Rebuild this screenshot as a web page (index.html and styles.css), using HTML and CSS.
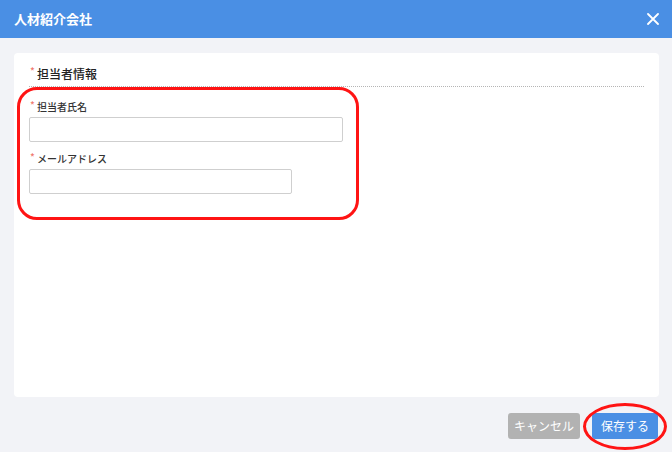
FILE: index.html
```html
<!DOCTYPE html>
<html lang="ja">
<head>
<meta charset="utf-8">
<link rel="stylesheet" href="styles.css">
</head>
<body>
<div class="dialog">
  <header class="dlg-header">
    <span class="dlg-title">人材紹介会社</span>
    <svg class="close" width="12" height="12" viewBox="0 0 12 12"><path d="M1 1L11 11M11 1L1 11" stroke="#fff" stroke-width="1.8" stroke-linecap="round"/></svg>
  </header>
  <main class="dlg-body">
    <section class="card">
      <div class="sec-title"><span class="req">*</span>担当者情報</div>
      <div class="fields">
        <div class="field">
          <label class="label"><span class="req">*</span>担当者氏名</label>
          <input class="input input-wide" type="text">
        </div>
        <div class="field">
          <label class="label"><span class="req">*</span>メールアドレス</label>
          <input class="input input-mid" type="text">
        </div>
      </div>
      <div class="mark mark-fields"></div>
    </section>
  </main>
  <footer class="dlg-footer">
    <button class="btn btn-cancel">キャンセル</button>
    <button class="btn btn-save">保存する</button>
    <div class="mark mark-save"></div>
  </footer>
</div>
</body>
</html>
```
FILE: styles.css
```css
* { box-sizing: border-box; }
html, body { margin: 0; padding: 0; }
body {
  width: 672px;
  height: 452px;
  background: #f2f3f7;
  font-family: "Noto Sans CJK JP", "Noto Sans", sans-serif;
  color: #333;
  overflow: hidden;
}
.dialog { position: relative; width: 672px; height: 452px; }
.dlg-header {
  height: 38px;
  background: #4a8fe4;
  display: flex;
  align-items: center;
  justify-content: space-between;
  padding: 0 13px 0 14px;
}
.dlg-title {
  color: #fff;
  font-size: 13px;
  font-weight: 700;
  line-height: 16px;
}
.dlg-body { padding: 15px 13px 0 14px; }
.card {
  position: relative;
  background: #fff;
  border-radius: 4px;
  height: 344px;
  padding: 13px 15px 0 15px;
}
.sec-title {
  font-size: 12px;
  line-height: 16px;
  font-weight: 500;
  color: #222;
  padding-bottom: 4px;
  border-bottom: 1px dotted #b5b5b5;
}
.req {
  color: #f07a6e;
  font-size: 10px;
  display: inline-block;
  width: 8px;
  text-align: left;
  vertical-align: top;
  line-height: 10px;
  margin-left: 1px;
  margin-right: -1px;
}
.fields {
  display: flex;
  flex-direction: column;
  gap: 10px;
  margin-top: 13px;
}
.field { display: flex; flex-direction: column; }
.label {
  font-size: 10px;
  line-height: 14px;
  font-weight: 500;
  color: #333;
  margin-bottom: 3px;
}
.input {
  height: 25px;
  border: 1px solid #cfcfcf;
  border-radius: 2px;
  background: #fff;
  padding: 0 6px;
  font: inherit;
}
.input-wide { width: 314px; }
.input-mid { width: 263px; }
.dlg-footer {
  position: relative;
  display: flex;
  justify-content: flex-end;
  gap: 12px;
  padding: 16px 14px 0 0;
}
.btn {
  height: 26px;
  border: none;
  border-radius: 3px;
  color: #fff;
  font-family: inherit;
  font-size: 12px;
  line-height: 26px;
  padding: 0;
}
.btn-cancel { width: 72px; background: #b2b2b2; }
.btn-save { width: 66px; background: #4a8fe4; }
.mark {
  position: absolute;
  border: 3px solid #ff1414;
  pointer-events: none;
}
.mark-fields {
  left: 3px;
  top: 34px;
  width: 342px;
  height: 133px;
  border-radius: 20px;
}
.mark-save {
  right: 5px;
  top: 6px;
  width: 84px;
  height: 47px;
  border-radius: 50%;
}
```
